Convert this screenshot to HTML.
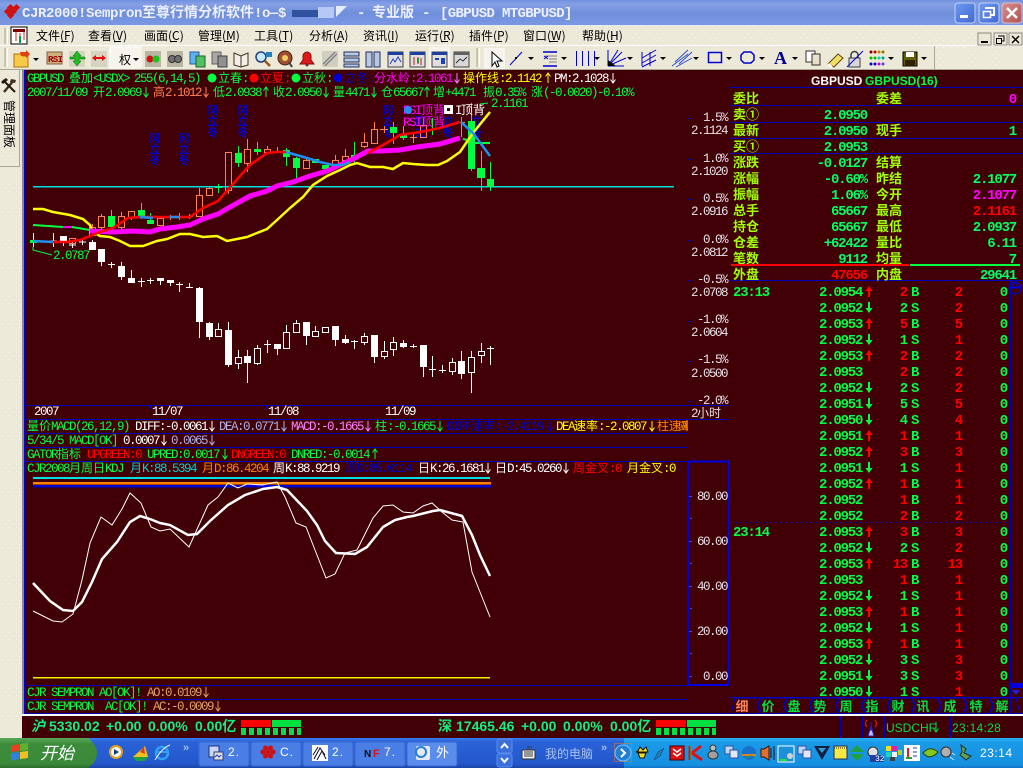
<!DOCTYPE html>
<html><head><meta charset="utf-8"><title>CJR2000</title>
<style>
html,body{margin:0;padding:0;background:#400005;overflow:hidden;width:1023px;height:768px}
svg{position:absolute;left:0;top:0;display:block}
text{font-family:"Liberation Mono","WenQuanYi Zen Hei","Noto Sans CJK SC",monospace;font-size:12.5px;letter-spacing:-1.5px;white-space:pre;shape-rendering:crispEdges}
tspan.z,text.z{font-family:"WenQuanYi Zen Hei","Noto Sans CJK SC",sans-serif;font-size:12px;letter-spacing:0}
.g{fill:#00ff40}.r{fill:#ff0000}.w{fill:#fff}.y{fill:#ffff00}.m{fill:#ff00ff}.b{fill:#0000c8}.o{fill:#ff8050}.l{fill:#b0b0e8}.p{fill:#ff80ff}.c{fill:#00d0d0}.t{fill:#e0a060}.or{fill:#ff8000}
.ax text{fill:#e8e0e8;text-anchor:end}
.lab text{font-family:"WenQuanYi Zen Hei","Noto Sans CJK SC",sans-serif;font-size:13px;letter-spacing:0;font-weight:bold;fill:#a0ff00}
.val text{font-size:14px;font-weight:bold;letter-spacing:-1.2px;text-anchor:end;fill:#00ff60}
.pr text{font-size:14px;font-weight:bold;letter-spacing:-1.2px;fill:#00ff40}
.rd text{font-size:14px;font-weight:bold;letter-spacing:-1.2px;text-anchor:end;fill:#ff0000}
.gv text{font-size:14px;font-weight:bold;letter-spacing:-1.2px;text-anchor:end;fill:#00ff40}
.bs text{font-size:14px;font-weight:bold;letter-spacing:-1.2px;fill:#00ff40}
.menu text{font-family:"WenQuanYi Zen Hei","Noto Sans CJK SC",sans-serif;font-size:12px;letter-spacing:0;fill:#000}
.tab text{font-family:"WenQuanYi Zen Hei","Noto Sans CJK SC",sans-serif;font-size:13px;letter-spacing:0;font-weight:bold;fill:#00e040;text-anchor:middle}
.st text{font-family:"Liberation Sans",sans-serif;font-size:14px;font-weight:bold;letter-spacing:0;fill:#10f080}
.dk{font-family:"WenQuanYi Zen Hei","Noto Sans CJK SC",sans-serif;font-size:11px;letter-spacing:0;fill:#0000d0;font-weight:bold}
.tb text{font-family:"Liberation Sans",sans-serif;font-size:12px;letter-spacing:1px;fill:#fff}
</style></head><body>
<svg width="1023" height="768" viewBox="0 0 1023 768" xmlns="http://www.w3.org/2000/svg">
<defs>
<pattern id="dp" width="7" height="7" patternUnits="userSpaceOnUse"><rect width="7" height="7" fill="#ece9d8"/><rect x="2" y="2" width="1" height="1" fill="#f8f6ee"/><rect x="5" y="5" width="1" height="1" fill="#f8f6ee"/></pattern>
<linearGradient id="ti" x1="0" y1="0" x2="0" y2="1"><stop offset="0" stop-color="#6f8fe0"/><stop offset=".15" stop-color="#86a0e4"/><stop offset=".5" stop-color="#6f8fdc"/><stop offset="1" stop-color="#7b98e4"/></linearGradient>
<linearGradient id="tk" x1="0" y1="0" x2="0" y2="1"><stop offset="0" stop-color="#3a7df0"/><stop offset=".12" stop-color="#2a62d8"/><stop offset=".85" stop-color="#2458cc"/><stop offset="1" stop-color="#1a44a8"/></linearGradient>
<linearGradient id="try" x1="0" y1="0" x2="0" y2="1"><stop offset="0" stop-color="#28b0f0"/><stop offset=".15" stop-color="#1a9ae8"/><stop offset=".9" stop-color="#1690e0"/><stop offset="1" stop-color="#1070c8"/></linearGradient>
<linearGradient id="sb" x1="0" y1="0" x2="0" y2="1"><stop offset="0" stop-color="#5aa85a"/><stop offset=".2" stop-color="#3c8c3c"/><stop offset=".85" stop-color="#3a8a3a"/><stop offset="1" stop-color="#2c6c2c"/></linearGradient>
<linearGradient id="wb" x1="0" y1="0" x2="1" y2="1"><stop offset="0" stop-color="#6f9af0"/><stop offset="1" stop-color="#3f68d0"/></linearGradient>
<linearGradient id="wc" x1="0" y1="0" x2="1" y2="1"><stop offset="0" stop-color="#d89090"/><stop offset="1" stop-color="#b05050"/></linearGradient>
<path id="d" d="M0 0V10M-2.5 6.5L0 10L2.5 6.5" fill="none"/>
<path id="u" d="M0 10V0M-2.5 3.5L0 0L2.5 3.5" fill="none"/>
<path id="D" d="M-1 0H1V6H3.5L0 11L-3.5 6H-1Z"/>
<path id="U" d="M-1 11H1V5H3.5L0 0L-3.5 5H-1Z"/>
<path id="v" d="M-3 0H3L0 3Z" fill="#000"/>
</defs>

<!-- background regions -->
<rect width="1023" height="768" fill="#400005"/>
<rect width="1023" height="26" fill="url(#ti)"/>
<rect y="26" width="1023" height="44" fill="url(#dp)"/>
<rect y="70" width="22" height="646" fill="url(#dp)"/>
<rect x="22" y="70" width="2" height="645" fill="#8c8a80"/>
<rect x="24" y="70" width="2" height="644" fill="#0000d8"/>
<rect y="25" width="1023" height="1" fill="#e8e8f0"/>
<rect y="45" width="1023" height="1" fill="#fff"/>
<rect y="46" width="935" height="23" fill="#ece9d8"/>
<rect x="934" y="46" width="1" height="23" fill="#aca899"/>
<rect y="69" width="1023" height="1" fill="#aca899"/>

<!-- title bar -->
<g fill="#d01010"><rect x="5" y="9" width="5" height="5" transform="rotate(45 7.5 11.5)"/><rect x="11" y="9" width="5" height="5" transform="rotate(45 13.5 11.5)"/><rect x="8" y="5" width="5" height="5" transform="rotate(45 10.5 7.5)"/><rect x="8" y="13" width="5" height="5" transform="rotate(45 10.5 15.5)"/><rect x="14" y="5" width="5" height="5" transform="rotate(45 16.5 7.5)"/></g>
<text x="22" y="17" style="font-size:14px;font-weight:bold;letter-spacing:-.4px;fill:#eef0ff">CJR2000!Sempron<tspan style="font-family:'WenQuanYi Zen Hei','Noto Sans CJK SC',sans-serif;letter-spacing:0">至尊行情分析软件</tspan>!o—$</text>
<rect x="292" y="10" width="26" height="7" fill="#3050a0"/><rect x="318" y="7" width="16" height="11" fill="#b8c8f4"/>
<path d="M336 6H347L336 17Z" fill="#e8ecff"/>
<text x="357" y="17" style="font-size:14px;font-weight:bold;letter-spacing:-.4px;fill:#eef0ff">-</text>
<text x="372" y="17" style="font-family:'WenQuanYi Zen Hei','Noto Sans CJK SC',sans-serif;font-size:14px;font-weight:bold;letter-spacing:0;fill:#eef0ff">专业版</text>
<text x="422" y="17" style="font-size:14px;font-weight:bold;letter-spacing:-.4px;fill:#eef0ff">-</text>
<text x="440" y="17" style="font-size:14px;font-weight:bold;letter-spacing:-.65px;fill:#eef0ff">[GBPUSD MTGBPUSD]</text>
<rect x="955" y="3" width="20" height="20" rx="3" fill="url(#wb)" stroke="#c0d0f8"/><rect x="960" y="15" width="8" height="3" fill="#fff"/>
<rect x="979" y="3" width="20" height="20" rx="3" fill="url(#wb)" stroke="#c0d0f8"/><path d="M985 8h9v7h-3" fill="none" stroke="#fff" stroke-width="2"/><rect x="983.500" y="11.500" width="7" height="6" fill="none" stroke="#fff" stroke-width="1.500"/>
<rect x="1002" y="3" width="20" height="20" rx="3" fill="url(#wc)" stroke="#e0c0c0"/><path d="M1007 8L1017 18M1017 8L1007 18" stroke="#fff" stroke-width="2.500"/>

<!-- menu bar -->
<g fill="#c8c5b2"><rect x="4" y="28" width="2" height="16"/><rect x="7" y="28" width="1" height="16" fill="#fff"/></g>
<rect x="11" y="27" width="16" height="17" fill="#fff" stroke="#000"/><rect x="13" y="29" width="12" height="3" fill="#800000"/><path d="M16 32V41M20 33V43M24 32V40" stroke="#e02020"/><path d="M20 36V43" stroke="#00a040" stroke-width="2"/>
<g class="menu">
<text x="36" y="40">文件(F)</text><text x="88" y="40">查看(V)</text><text x="144" y="40">画面(C)</text><text x="198" y="40">管理(M)</text><text x="254" y="40">工具(T)</text><text x="309" y="40">分析(A)</text><text x="363" y="40">资讯(I)</text><text x="415" y="40">运行(R)</text><text x="469" y="40">插件(P)</text><text x="523" y="40">窗口(W)</text><text x="582" y="40">帮助(H)</text>
</g>
<g fill="#000">
<rect x="61" y="41" width="7" height="1"/><rect x="114" y="41" width="7" height="1"/><rect x="170" y="41" width="7" height="1"/><rect x="224" y="41" width="8" height="1"/><rect x="280" y="41" width="7" height="1"/><rect x="335" y="41" width="7" height="1"/><rect x="389" y="41" width="5" height="1"/><rect x="441" y="41" width="7" height="1"/><rect x="495" y="41" width="7" height="1"/><rect x="549" y="41" width="9" height="1"/><rect x="608" y="41" width="7" height="1"/>
</g>
<!-- MDI buttons -->
<g fill="#ece9d8" stroke="#8c8a80"><rect x="978" y="33" width="13" height="12"/><rect x="994" y="33" width="13" height="12"/><rect x="1009" y="33" width="13" height="12"/></g>
<rect x="981" y="41" width="7" height="2" fill="#000"/>
<path d="M998 36h6v5h-2M996.500 38.500h5v5h-5z" fill="none" stroke="#000"/>
<path d="M1012 36L1019 43M1019 36L1012 43" stroke="#000" stroke-width="1.500"/>

<!-- toolbar -->
<g fill="#c8c5b2"><rect x="4" y="48" width="2" height="19"/><rect x="7" y="48" width="1" height="19" fill="#fff"/><rect x="476" y="48" width="2" height="19"/><rect x="479" y="48" width="1" height="19" fill="#fff"/></g>
<path d="M14 54h7l2 2h5v11H14Z" fill="#f8c848" stroke="#b07010"/><path d="M20 52l6 0 0-2 4 4-4 4 0-2-5 0z" fill="#e04010"/>
<use href="#v" x="36" y="58"/>
<rect x="47" y="52" width="15" height="12" fill="#d0b080" stroke="#806040"/><text x="48" y="62" style="font-size:9px;letter-spacing:-.6px;fill:#a00000;font-weight:bold">RSI</text>
<rect x="69" y="51" width="16" height="16" fill="#d6d3c0"/><path d="M77 51L81 56H79V57H85L85 59 79 59 79 61 81 61 77 66 73 61 75 61 75 59 70 59 70 57 75 57 75 56 73 56Z" fill="#20c020" stroke="#006000" stroke-width=".5"/>
<rect x="91" y="51" width="16" height="16" fill="#d6d3c0"/><path d="M92 58L96 55V57H102V55L106 58 102 61V59H96V61Z" fill="#e01010"/>
<rect x="110" y="47" width="32" height="22" fill="#f6f4ec"/><path d="M110 47H142M110 47V69" stroke="#fff"/>
<text class="z" x="119" y="64" style="fill:#000;font-size:12px">权</text><use href="#v" x="136" y="58"/>
<rect x="145" y="51" width="16" height="16" fill="#b8b5a4"/><circle cx="150" cy="59" r="3.500" fill="#d01010"/><circle cx="156" cy="59" r="3.500" fill="#20c020"/>
<rect x="167" y="51" width="16" height="16" fill="#b8b5a4"/><circle cx="172" cy="59" r="3.500" fill="#707070" stroke="#303030"/><circle cx="178" cy="59" r="3.500" fill="#707070" stroke="#303030"/>
<rect x="190" y="52" width="9" height="12" fill="#60b0f0" stroke="#2060a0"/><rect x="196" y="56" width="9" height="11" fill="#50c060" stroke="#206030"/>
<rect x="212" y="52" width="9" height="12" fill="#a8a8a8" stroke="#606060"/><rect x="218" y="56" width="9" height="11" fill="#909090" stroke="#404040"/>
<path d="M234 53l7 3 7-3v12l-7 2-7-2z" fill="#f4f0e8" stroke="#403020"/><path d="M241 56v11" stroke="#403020"/>
<circle cx="261" cy="57" r="5" fill="#c8e8ff" stroke="#204080" stroke-width="1.500"/><path d="M265 61l5 5" stroke="#a05010" stroke-width="2.500"/><rect x="266" y="52" width="6" height="5" fill="#2080c0"/>
<circle cx="285" cy="58" r="7" fill="#a05030" stroke="#402010"/><circle cx="285" cy="58" r="3" fill="#f0d060"/><path d="M289 62l3 5" stroke="#404040" stroke-width="2"/>
<path d="M300 64H314L311 60V56A4 4 0 0 0 303 56V60Z" fill="#e01818" stroke="#801010"/><circle cx="307" cy="65" r="1.500" fill="#802020"/>
<rect x="322" y="51" width="16" height="16" fill="#d0cebc"/><path d="M324 65L336 53" stroke="#808080" stroke-width="4"/><path d="M324 65L336 53" stroke="#d8d8d8" stroke-width="1"/>
<g fill="#b8c8e0" stroke="#203060"><rect x="344" y="52" width="15" height="4"/><rect x="344" y="58" width="15" height="4"/><rect x="344" y="64" width="15" height="3"/></g>
<g fill="#b8c8e0" stroke="#203060"><rect x="366" y="52" width="6" height="15"/><rect x="374" y="52" width="6" height="15"/></g>
<rect x="388" y="52" width="15" height="15" fill="#e0e0e0" stroke="#404040"/><rect x="388" y="52" width="15" height="3" fill="#2040a0"/><path d="M390 64l3-5 2 3 3-5 3 5" fill="none" stroke="#2040c0"/>
<rect x="410" y="52" width="15" height="15" fill="#e0e0e0" stroke="#404040"/><rect x="410" y="52" width="15" height="3" fill="#2040a0"/><path d="M414 57v8M418 57v7M421 58v7" stroke="#d01010"/><path d="M418 58v5" stroke="#10a040" stroke-width="2"/>
<rect x="429" y="47" width="21" height="22" fill="#f6f4ec"/>
<rect x="432" y="52" width="15" height="15" fill="#e0e0e0" stroke="#404040"/><rect x="432" y="52" width="15" height="3" fill="#2040a0"/><rect x="435" y="58" width="4" height="2" fill="#2040c0"/><rect x="441" y="58" width="4" height="6" fill="#2040c0"/>
<rect x="454" y="52" width="15" height="15" fill="#d8d8d8" stroke="#404040"/><rect x="454" y="52" width="15" height="3" fill="#606060"/><path d="M456 63l4-4 3 2 4-4" fill="none" stroke="#303030"/>
<rect x="484" y="48" width="21" height="21" fill="#f6f4ec"/>
<path d="M492 52V66L495 62 497 67 499 66 497 61 502 61Z" fill="#fff" stroke="#000"/>
<path d="M510 65L522 52" stroke="#0000d0"/><rect x="515" y="57" width="2" height="2" fill="#000"/><use href="#v" x="531" y="57"/>
<path d="M543 52H557M543 66H557" stroke="#0000d0" stroke-width="1.500"/><path d="M545 56H557M549 59H557M549 62H557" stroke="#808080"/><path d="M544 56l4 3M544 59l4-3" stroke="#0000d0"/><use href="#v" x="564" y="57"/>
<path d="M576.500 51V66M582.500 51V66M588.500 51V66" stroke="#0000d0"/><path d="M594.500 51V66" stroke="#0000d0"/><use href="#v" x="597" y="57"/>
<path d="M608 66V50M608 66L624 66M608 66L622 52M608 66L626 58M608 66L618 50" stroke="#0000d0" fill="none"/><path d="M608 60L616 66H608Z" fill="#000"/><use href="#v" x="630" y="57"/>
<path d="M642 52V66M650 52V66M642 58L656 50M642 63L656 55M642 67L656 60" stroke="#0000d0" fill="none"/><use href="#v" x="663" y="57"/>
<path d="M675 62L688 50M679 64L692 52M672 66L688 54M676 67L692 58" stroke="#3050d0" fill="none"/><use href="#v" x="696" y="57"/>
<rect x="708.500" y="52.500" width="13" height="10" fill="none" stroke="#0000d0" stroke-width="1.500"/><use href="#v" x="729" y="57"/>
<path d="M744 52h7l3 3v5l-3 3h-7l-3-3v-5z" fill="none" stroke="#0000d0" stroke-width="1.500"/><use href="#v" x="762" y="57"/>
<text x="774" y="64" style="font-family:'Liberation Serif',serif;font-size:18px;font-weight:bold;fill:#000090;letter-spacing:0">A</text><use href="#v" x="795" y="57"/>
<rect x="806" y="51" width="9" height="11" fill="#fff" stroke="#303030"/><rect x="812" y="54" width="8" height="11" fill="#e8e0c8" stroke="#303030"/>
<path d="M828 64l10-10 5 4-9 9z" fill="#f0e060" stroke="#604010"/><path d="M828 64l4 3" stroke="#fff" stroke-width="2"/>
<rect x="849" y="58" width="11" height="9" fill="#d8d8d8" stroke="#404040"/><path d="M851 58v-3a3 3 0 0 1 7 0v3" fill="none" stroke="#404040" stroke-width="1.500"/><path d="M847 67L863 51" stroke="#0000d0"/>
<g fill="#800000"><circle cx="871" cy="52" r="1.500"/><circle cx="875" cy="52" r="1.500" fill="#d00000"/><circle cx="879" cy="52" r="1.500" fill="#c08000"/><circle cx="883" cy="52" r="1.500" fill="#808000"/></g>
<g fill="#00c000"><circle cx="871" cy="58" r="1.500"/><circle cx="875" cy="58" r="1.500"/><circle cx="879" cy="58" r="1.500" fill="#00d0d0"/><circle cx="883" cy="58" r="1.500" fill="#00a080"/></g>
<g fill="#0000c0"><circle cx="871" cy="64" r="1.500"/><circle cx="875" cy="64" r="1.500"/><circle cx="879" cy="64" r="1.500" fill="#d000d0"/><circle cx="883" cy="64" r="1.500" fill="#4040f0"/></g>
<use href="#v" x="891" y="57"/>
<rect x="903" y="52" width="14" height="14" fill="#606000" stroke="#000"/><rect x="906" y="52" width="8" height="5" fill="#fff"/><rect x="905" y="60" width="10" height="6" fill="#302000"/>
<use href="#v" x="924" y="57"/>

<!-- sidebar -->
<path d="M19.500 70V166.500H0" fill="none" stroke="#aca899"/>
<path d="M4 92L14 80" stroke="#403020" stroke-width="2.500" fill="none"/><path d="M3 80L15 92" stroke="#201810" stroke-width="2" fill="none"/><path d="M1 82l5-4 2 2-5 4z" fill="#201810"/><path d="M11 79l5 1-1 3-5-1z" fill="#403020"/>
<text class="z" transform="translate(5 100) rotate(90)" style="font-size:12px;fill:#000">管理面板</text>

<!-- grid lines -->
<g stroke="#0000b8" fill="none" shape-rendering="crispEdges">
<path d="M687.500 70V714M729.500 70V714M24 405.500H730M24 419.500H730M24 433.500H687M24 447.500H687M24 461.500H687M24 685.500H730M24 699.500H687M24 713.500H1023"/>
<path d="M729 87.500H1023M729 105.500H1023M729 122.500H1023M729 138.500H1023M729 153.500H1023M729 280.500H1023M1010.500 281V714M729 697.500H1023"/>
<path d="M33.500 405V419M150.500 405V409M266.500 405V409M383.500 405V409"/>
<path d="M688 118.500h4M688 159.500h4M688 199.500h4M688 240.500h4M688 280.500h4M688 321.500h4M688 361.500h4M688 401.500h4"/>
<path d="M730 522.500H1010" stroke-dasharray="2 3"/>
<path d="M692 496.500h-3M692 518.500h-2M692 541.500h-3M692 563.500h-2M692 586.500h-3M692 608.500h-2M692 631.500h-3M692 653.500h-2M692 676.500h-3" stroke="#4040ff"/>
</g>
<rect x="688" y="461.500" width="41" height="223.500" fill="none" stroke="#0000e0" stroke-width="2"/>

<!-- top rows -->
<text x="27" y="82" class="g">GBPUSD</text>
<text x="69" y="82" class="g"><tspan class="z">叠加</tspan>&lt;USDX&gt;</text>
<text x="134" y="82" class="g">255(6,14,5)</text>
<circle cx="212" cy="78" r="4.500" fill="#00ff40"/><text x="218" y="82" class="g"><tspan class="z">立春</tspan>:</text>
<circle cx="254" cy="78" r="4.500" fill="#ff0000"/><text x="260" y="82" class="r"><tspan class="z">立夏</tspan>:</text>
<circle cx="296" cy="78" r="4.500" fill="#00ff40"/><text x="302" y="82" class="g"><tspan class="z">立秋</tspan>:</text>
<circle cx="338" cy="78" r="4.500" fill="#0000d0"/><text x="344" y="82" class="b"><tspan class="z">立冬</tspan>:</text>
<text x="374" y="82" class="m"><tspan class="z">分水岭</tspan>:2.1061</text>
<use href="#d" x="457" y="73" stroke="#ff80ff"/>
<text x="463" y="82" class="y"><tspan class="z">操作线</tspan>:2.1142</text>
<use href="#u" x="548" y="73" stroke="#ffff00"/>
<text x="554" y="82" class="w">PM:2.1028</text>
<use href="#d" x="613" y="73" stroke="#fff"/>

<text x="27" y="96" class="g">2007/11/09</text>
<text x="93" y="96" class="g"><tspan class="z">开</tspan>2.0969</text><use href="#d" x="146" y="87" stroke="#00ff40"/>
<text x="153" y="96" class="o"><tspan class="z">高</tspan>2.1012</text><use href="#d" x="206" y="87" stroke="#ff8050"/>
<text x="213" y="96" class="g"><tspan class="z">低</tspan>2.0938</text><use href="#u" x="266" y="87" stroke="#00ff40"/>
<text x="273" y="96" class="g"><tspan class="z">收</tspan>2.0950</text><use href="#d" x="326" y="87" stroke="#00ff40"/>
<text x="333" y="96" class="g"><tspan class="z">量</tspan>4471</text><use href="#d" x="374" y="87" stroke="#00ff40"/>
<text x="381" y="96" class="g"><tspan class="z">仓</tspan>65667</text><use href="#u" x="427" y="87" stroke="#00ff40"/>
<text x="433" y="96" class="g"><tspan class="z">增</tspan>+4471</text>
<text x="483" y="96" class="g"><tspan class="z">振</tspan>0.35%</text>
<text x="531" y="96" class="g"><tspan class="z">涨</tspan>(-0.0020)-0.10%</text>

<!-- blue 立冬 marks -->
<g text-anchor="middle">
<text class="dk" x="155" y="142">冈</text><text class="dk" x="155" y="153">立</text><text class="dk" x="155" y="164">冬</text>
<text class="dk" x="184" y="142">冈</text><text class="dk" x="184" y="153">立</text><text class="dk" x="184" y="164">冬</text>
<text class="dk" x="213" y="114">冈</text><text class="dk" x="213" y="125">立</text><text class="dk" x="213" y="136">冬</text>
<text class="dk" x="243" y="114">冈</text><text class="dk" x="243" y="125">立</text><text class="dk" x="243" y="136">冬</text>
<text class="dk" x="388" y="114">冈</text><text class="dk" x="388" y="125">立</text><text class="dk" x="388" y="136">冬</text>
<text class="dk" x="420" y="125">冈</text><text class="dk" x="420" y="136">立</text>
<text class="dk" x="448" y="125">立</text><text class="dk" x="448" y="136">冬</text>
<text class="dk" x="477" y="125">立</text><text class="dk" x="477" y="136">冬</text>
</g>

<!-- cyan line -->
<rect x="33" y="186" width="641" height="1.500" fill="#00e0e0"/>

<!-- white candles wicks -->
<path shape-rendering="crispEdges" fill="none" stroke="#fff" d="M33.500 233V247M30 241H37M53.500 233V247M50 241H57M63.500 236V246M72.500 242V248M69 245H76M82.500 239V245M79 242H86M92.500 240V250M101.500 262V266M111.500 262V268M108 264.500H115M121.500 262V280M131.500 270V283M141.500 278V287M138 281.500H145M150.500 278V284M147 280.500H154M160.500 281V285M170.500 283V286M179.500 282V292M176 284.500H183M189.500 283V288M186 287.500H193M199.500 287V338M209.500 322V340M218.500 323V329M228.500 322V367M238.500 350V357M238.500 363V369M247.500 350V383M257.500 345V348M257.500 363V365M267.500 340V353M264 344.500H271M277.500 349V355M286.500 325V332M286.500 348V349M296.500 320V323M306.500 336V345M315.500 326V331M325.500 332V333M335.500 340V346M345.500 335V344M354.500 340V349M351 341.500H358M364.500 333V336M364.500 342V345M374.500 335V363M384.500 341V351M384.500 356V359M393.500 337V342M393.500 349V356M403.500 340V348M413.500 344V348M410 346.500H417M423.500 345V377M432.500 356V377M429 369.500H436M442.500 365V373M439 370.500H446M452.500 358V362M452.500 371V375M461.500 351V379M471.500 351V357M471.500 372V393M481.500 343V351M481.500 355V363M490.500 346V365M487 348.500H494"/>
<path shape-rendering="crispEdges" fill="#fff" d="M60 236h7v5h-7zM89 242h7v8h-7zM98 249h7v13h-7zM118 266h7v11h-7zM128 278h7v5h-7zM157 278h7v3h-7zM167 280h7v3h-7zM196 288h7v34h-7zM206 323h7v14h-7zM225 330h7v35h-7zM244 356h7v7h-7zM274 344h7v5h-7zM303 322h7v14h-7zM332 326h7v14h-7zM342 339h7v4h-7zM371 335h7v22h-7zM400 343h7v4h-7zM420 345h7v22h-7zM458 361h7v13h-7z"/>
<path shape-rendering="crispEdges" fill="none" stroke="#fff" d="M215.500 329.500h6v7h-6zM235.500 357.500h6v6h-6zM254.500 348.500h6v15h-6zM283.500 332.500h6v16h-6zM293.500 323.500h6v9h-6zM312.500 331.500h6v5h-6zM322.500 327.500h6v5h-6zM361.500 336.500h6v6h-6zM381.500 351.500h6v5h-6zM390.500 342.500h6v7h-6zM449.500 362.500h6v9h-6zM468.500 357.500h6v15h-6zM478.500 351.500h6v4h-6z"/>

<!-- orange candles -->
<path shape-rendering="crispEdges" fill="none" stroke="#ff8050" d="M69.500 238.500h6v5h-6zM89.500 227.500h6v8h-6zM92.500 224V227M98.500 216.500h6v11h-6zM101.500 214V216M101.500 228V229M118.500 216.500h6v11h-6zM121.500 212V216M121.500 228V230M128.500 211.500h6v6h-6zM131.500 218V220M170.500 215V220M167 217.500H174M157.500 218.500h6v7h-6zM189.500 214V219M186 216.500H193M196.500 195.500h6v21h-6zM199.500 188V195M199.500 217V217M206.500 188.500h6v7h-6zM209.500 186V188M225.500 152.500h6v38h-6zM228.500 190V194M244.500 149.500h6v14h-6zM247.500 139V149M247.500 164V172M264.500 149.500h6v3h-6zM267.500 146V149M277.500 147V153M274 151.500H281M303.500 160.500h6v8h-6zM306.500 157V160M332.500 160.500h6v6h-6zM335.500 155V160M342.500 156.500h6v4h-6zM345.500 149V156M361.500 142.500h6v4h-6zM364.500 133V142M364.500 147V148M371.500 129.500h6v14h-6zM374.500 122V129M384.500 126V133M380 129.500H388M413.500 133V143M410 137.500H417M420.500 125.500h6v12h-6zM423.500 118V125M461.500 117V137M458 122.500H465"/>
<!-- green candles -->
<path shape-rendering="crispEdges" fill="#00ff40" d="M108 216h7v11h-7zM138 210h7v7h-7zM147 220h7v4h-7zM235 153h7v10h-7zM254 149h7v3h-7zM283 150h7v7h-7zM293 158h7v10h-7zM312 159h7v4h-7zM322 165h7v4h-7zM351 155h7v3h-7zM390 127h7v6h-7zM400 135h7v3h-7zM468 121h7v48h-7zM477 168h8v10h-8zM487 179h7v8h-7z"/>
<path shape-rendering="crispEdges" fill="none" stroke="#00ff40" d="M111.500 210V228M141.500 203V219M150.500 213V224M179.500 213V220M176 217.500H183M218.500 184V193M215 187.500H222M238.500 146V167M257.500 142V155M286.500 148V166M296.500 157V178M354.500 142V164M393.500 122V144M403.500 126V140M432.500 118V135M471.500 103V171M481.500 151V191M490.500 162V191"/>
<rect x="30" y="240" width="7" height="3" fill="#00ff40"/>

<!-- MA lines -->
<polyline fill="none" stroke="#00ff40" stroke-width="2" points="33,225 63,227"/>
<polyline fill="none" stroke="#ff00ff" stroke-width="2" points="63,227 72,227"/>
<polyline fill="none" stroke="#00ff40" stroke-width="2" points="72,227 90,230"/>
<polyline fill="none" stroke="#00ff40" stroke-width="2" points="463,139 468,140 475,143 490,143"/>
<polyline fill="none" stroke="#ffff00" stroke-width="2.500" points="33,209 43,209 53,212 70,215 83,219 90,225 93,232 100,236 110,237 120,241 130,246 143,246 157,241 167,239 180,234 190,234 203,237 217,236 227,241 237,239 247,237 257,233 267,229 277,220 290,208 303,197 313,185 327,176 340,170 350,165 357,163 370,167 383,167 393,169 403,163 413,164 427,165 438,165 447,161 460,152 473,133 490,112"/>
<polyline fill="none" stroke="#ff00ff" stroke-width="5" points="90,231 113,232 133,231 150,232 160,229 177,227 190,225 203,219 218,214 230,207 250,196 267,191 277,186 293,182 310,176 327,171 340,165 353,159 368,151 380,151 400,150 417,147 440,144 460,138"/>
<polyline fill="none" stroke="#ff0000" stroke-width="2.500" points="53,242 67,242 80,240 90,236 100,232 113,228 128,218 140,217 153,217 170,217 190,217 203,208 218,201 232,185 250,165 267,153 277,152 286,152"/>
<polyline fill="none" stroke="#ff0000" stroke-width="2.500" points="368,153 383,145 400,135 420,132 440,128 460,122"/>
<polyline fill="none" stroke="#2090f0" stroke-width="2.500" points="33,241 53,242"/>
<polyline fill="none" stroke="#2090f0" stroke-width="2.500" points="140,217 153,218"/>
<polyline fill="none" stroke="#2090f0" stroke-width="2.500" points="170,217 180,217"/>
<polyline fill="none" stroke="#2090f0" stroke-width="2.500" points="286,152 293,154 307,158 320,162 333,165 343,165 350,162"/>
<polyline fill="none" stroke="#2090f0" stroke-width="2.500" points="461,122 473,133 490,156"/>
<polyline fill="none" stroke="#00ff40" points="33,247 33,250 52,255"/>
<polyline fill="none" stroke="#00ff40" points="480,104 488,103"/>
<text x="53" y="259" class="g">2.0787</text>
<text x="491" y="107" class="g">2.1161</text>

<!-- divergence labels -->
<text x="403" y="114" class="m">RSI<tspan class="z">顶背</tspan></text>
<text x="403" y="126" class="m">RSI<tspan class="z">顶背</tspan></text>
<circle cx="408" cy="110" r="4" fill="#2090f0"/>
<rect x="444" y="105" width="9" height="9" fill="#fff"/><rect x="447" y="108" width="3" height="3" fill="#400005"/>
<text x="455" y="114" class="w">I<tspan class="z">顶背</tspan></text>

<!-- time axis -->
<text x="34" y="415" class="w">2007</text><text x="152" y="415" class="w">11/07</text><text x="268" y="415" class="w">11/08</text><text x="385" y="415" class="w">11/09</text>

<!-- axis labels -->
<g class="ax">
<text x="727" y="121">1.5%</text><text x="727" y="134">2.1124</text>
<text x="727" y="162">1.0%</text><text x="727" y="175">2.1020</text>
<text x="727" y="202">0.5%</text><text x="727" y="215">2.0916</text>
<text x="727" y="243">0.0%</text><text x="727" y="256">2.0812</text>
<text x="727" y="283">-0.5%</text><text x="727" y="296">2.0708</text>
<text x="727" y="323">-1.0%</text><text x="727" y="336">2.0604</text>
<text x="727" y="363">-1.5%</text><text x="727" y="377">2.0500</text>
<text x="727" y="404">-2.0%</text><text x="721" y="417">2<tspan class="z">小时</tspan></text>
<text x="727" y="500">80.00</text><text x="727" y="545">60.00</text><text x="727" y="590">40.00</text><text x="727" y="635">20.00</text><text x="727" y="680">0.00</text>
</g>
<text class="z" transform="translate(680 421) rotate(90)" style="font-size:10px;fill:#ff9000">图</text>

<!-- indicator rows -->
<text x="27" y="430" class="g"><tspan class="z">量价</tspan>MACD(26,12,9)</text>
<text x="135" y="430" class="w">DIFF:-0.0061</text><use href="#d" x="212" y="421" stroke="#fff"/>
<text x="219" y="430" class="l">DEA:0.0771</text><use href="#d" x="284" y="421" stroke="#b0b0e8"/>
<text x="291" y="430" class="p">MACD:-0.1665</text><use href="#d" x="368" y="421" stroke="#ff80ff"/>
<text x="375" y="430" class="g"><tspan class="z">柱</tspan>:-0.1665</text><use href="#d" x="440" y="421" stroke="#00ff40"/>
<text x="447" y="430" class="b">DIFF<tspan class="z">速率</tspan>:-2.4119</text><use href="#d" x="550" y="421" stroke="#0000c8"/>
<text x="556" y="430" class="y">DEA<tspan class="z">速率</tspan>:-2.0807</text><use href="#d" x="652" y="421" stroke="#ffff00"/>
<text x="657" y="430" class="or"><tspan class="z">柱速率</tspan></text>
<rect x="688" y="420" width="6" height="13" fill="#400005"/>

<text x="27" y="444" class="g">5/34/5 MACD[OK]</text>
<text x="123" y="444" class="w">0.0007</text><use href="#d" x="164" y="435" stroke="#fff"/>
<text x="171" y="444" class="l">0.0065</text><use href="#d" x="212" y="435" stroke="#b0b0e8"/>

<text x="27" y="458" class="g">GATOR<tspan class="z">指标</tspan></text>
<text x="87" y="458" class="r">UPGREEN:0</text>
<text x="147" y="458" class="g">UPRED:0.0017</text><use href="#d" x="225" y="449" stroke="#00ff40"/>
<text x="231" y="458" class="r">DNGREEN:0</text>
<text x="291" y="458" class="g">DNRED:-0.0014</text><use href="#u" x="375" y="449" stroke="#00ff40"/>

<text x="27" y="472" class="g">CJR2008<tspan class="z">月周日</tspan>KDJ</text>
<text x="130" y="472" class="c"><tspan class="z">月</tspan>K:88.5394</text>
<text x="202" y="472" class="or"><tspan class="z">月</tspan>D:86.4204</text>
<text x="273" y="472" class="w"><tspan class="z">周</tspan>K:88.9219</text>
<text x="345" y="472" class="b"><tspan class="z">周</tspan>D:85.0114</text>
<text x="418" y="472" class="w"><tspan class="z">日</tspan>K:26.1681</text><use href="#d" x="488" y="463" stroke="#fff"/>
<text x="495" y="472" class="w"><tspan class="z">日</tspan>D:45.0260</text><use href="#d" x="566" y="463" stroke="#fff"/>
<text x="573" y="472" class="r"><tspan class="z">周金叉</tspan>:0</text>
<text x="627" y="472" class="y"><tspan class="z">月金叉</tspan>:0</text>

<!-- KDJ -->
<rect x="33" y="477" width="457" height="2" fill="#00e0e0"/>
<rect x="33" y="482" width="458" height="2.500" fill="#ff8000"/>
<rect x="33" y="485" width="458" height="2.500" fill="#0000d0"/>
<polyline fill="none" stroke="#fff" stroke-width="1" points="33,611 53,621 62,622 73,614 82,580 90,543 101,517 112,525 122,509 130,493 141,503 151,527 160,531 170,529 189,547 208,505 218,497 228,483 238,488 247,484 262,485 277,482 285,497 296,523 306,527 315,550 326,578 335,574 345,553 357,550 373,518 383,506 393,505 403,512 413,513 423,506 432,503 442,512 452,520 463,522 472,572 490,617"/>
<polyline fill="none" stroke="#fff" stroke-width="2.500" points="33,583 50,601 63,610 73,611 82,602 92,582 102,559 117,542 130,522 140,516 150,519 160,523 170,525 188,535 197,534 210,521 228,505 245,495 263,489 277,487 287,490 307,511 317,525 325,541 336,553 355,554 367,547 383,527 395,520 407,517 413,516 433,511 440,510 462,516 472,535 480,555 490,576"/>
<rect x="33" y="677" width="457" height="1.500" fill="#f0f000"/>

<text x="27" y="696" class="g">CJR SEMPRON AO[OK]!</text>
<text x="147" y="696" class="t">AO:0.0109</text><use href="#d" x="206" y="687" stroke="#e0a060"/>
<text x="27" y="710" class="g">CJR SEMPRON  AC[OK]!</text>
<text x="153" y="710" class="t">AC:-0.0009</text><use href="#d" x="218" y="701" stroke="#e0a060"/>

<!-- right panel header -->
<text x="811" y="85" style="font-family:'Liberation Sans',sans-serif;font-size:12px;font-weight:bold;letter-spacing:0;fill:#fff">GBPUSD</text>
<text x="865" y="85" style="font-family:'Liberation Sans',sans-serif;font-size:12px;font-weight:bold;letter-spacing:0;fill:#00ff40">GBPUSD(16)</text>

<g class="lab">
<text x="733" y="103">委比</text><text x="733" y="119">卖①</text><text x="733" y="135">最新</text><text x="733" y="151">买①</text><text x="733" y="167">涨跌</text><text x="733" y="183">涨幅</text><text x="733" y="199">振幅</text><text x="733" y="215">总手</text><text x="733" y="231">持仓</text><text x="733" y="247">仓差</text><text x="733" y="263">笔数</text><text x="733" y="279">外盘</text>
<text x="876" y="103">委差</text><text x="876" y="135">现手</text><text x="876" y="167">结算</text><text x="876" y="183">昨结</text><text x="876" y="199">今开</text><text x="876" y="215">最高</text><text x="876" y="231">最低</text><text x="876" y="247">量比</text><text x="876" y="263">均量</text><text x="876" y="279">内盘</text>
</g>
<g class="val">
<text x="867" y="119">2.0950</text><text x="867" y="135">2.0950</text><text x="867" y="151">2.0953</text><text x="867" y="167">-0.0127</text><text x="867" y="183">-0.60%</text><text x="867" y="199">1.06%</text><text x="867" y="215">65667</text><text x="867" y="231">65667</text><text x="867" y="247">+62422</text><text x="867" y="263">9112</text>
<text x="867" y="279" style="fill:#ff0000">47656</text>
<text x="1016" y="103" style="fill:#ff00ff">0</text><text x="1016" y="135">1</text><text x="1016" y="183">2.1077</text><text x="1016" y="199" style="fill:#ff00ff">2.1077</text><text x="1016" y="215" style="fill:#ff0000">2.1161</text><text x="1016" y="231">2.0937</text><text x="1016" y="247">6.11</text><text x="1016" y="263">7</text><text x="1016" y="279">29641</text>
</g>
<rect x="731" y="264" width="178" height="2" fill="#ff0000"/><rect x="910" y="264" width="110" height="2" fill="#00ff40"/>

<!-- tick list -->
<g class="pr">
<text x="733" y="296">23:13</text><text x="733" y="536">23:14</text>
<text x="819" y="296">2.0954</text><text x="819" y="312">2.0952</text><text x="819" y="328">2.0953</text><text x="819" y="344">2.0952</text><text x="819" y="360">2.0953</text><text x="819" y="376">2.0953</text><text x="819" y="392">2.0952</text><text x="819" y="408">2.0951</text><text x="819" y="424">2.0950</text><text x="819" y="440">2.0951</text><text x="819" y="456">2.0952</text><text x="819" y="472">2.0951</text><text x="819" y="488">2.0952</text><text x="819" y="504">2.0952</text><text x="819" y="520">2.0952</text><text x="819" y="536">2.0953</text><text x="819" y="552">2.0952</text><text x="819" y="568">2.0953</text><text x="819" y="584">2.0953</text><text x="819" y="600">2.0952</text><text x="819" y="616">2.0953</text><text x="819" y="632">2.0952</text><text x="819" y="648">2.0953</text><text x="819" y="664">2.0952</text><text x="819" y="680">2.0951</text><text x="819" y="696">2.0950</text>
</g>
<g fill="#ff0000"><use href="#U" x="869" y="286"/><use href="#U" x="869" y="318"/><use href="#U" x="869" y="350"/><use href="#U" x="869" y="430"/><use href="#U" x="869" y="446"/><use href="#U" x="869" y="478"/><use href="#U" x="869" y="526"/><use href="#U" x="869" y="558"/><use href="#U" x="869" y="606"/><use href="#U" x="869" y="638"/></g>
<g fill="#00ff40"><use href="#D" x="869" y="302"/><use href="#D" x="869" y="334"/><use href="#D" x="869" y="382"/><use href="#D" x="869" y="398"/><use href="#D" x="869" y="414"/><use href="#D" x="869" y="462"/><use href="#D" x="869" y="542"/><use href="#D" x="869" y="590"/><use href="#D" x="869" y="622"/><use href="#D" x="869" y="654"/><use href="#D" x="869" y="670"/><use href="#D" x="869" y="686"/></g>
<g class="rd">
<text x="907" y="296">2</text><text x="907" y="328">5</text><text x="907" y="360">2</text><text x="907" y="376">2</text><text x="907" y="440">1</text><text x="907" y="456">3</text><text x="907" y="488">1</text><text x="907" y="504">1</text><text x="907" y="520">2</text><text x="907" y="536">3</text><text x="907" y="568">13</text><text x="907" y="584">1</text><text x="907" y="616">1</text><text x="907" y="648">1</text>
<text x="962" y="296">2</text><text x="962" y="312">2</text><text x="962" y="328">5</text><text x="962" y="344">1</text><text x="962" y="360">2</text><text x="962" y="376">2</text><text x="962" y="392">2</text><text x="962" y="408">5</text><text x="962" y="424">4</text><text x="962" y="440">1</text><text x="962" y="456">3</text><text x="962" y="472">1</text><text x="962" y="488">1</text><text x="962" y="504">1</text><text x="962" y="520">2</text><text x="962" y="536">3</text><text x="962" y="552">2</text><text x="962" y="568">13</text><text x="962" y="584">1</text><text x="962" y="600">1</text><text x="962" y="616">1</text><text x="962" y="632">1</text><text x="962" y="648">1</text><text x="962" y="664">3</text><text x="962" y="680">3</text><text x="962" y="696">1</text>
</g>
<g class="gv">
<text x="907" y="312">2</text><text x="907" y="344">1</text><text x="907" y="392">2</text><text x="907" y="408">5</text><text x="907" y="424">4</text><text x="907" y="472">1</text><text x="907" y="552">2</text><text x="907" y="600">1</text><text x="907" y="632">1</text><text x="907" y="664">3</text><text x="907" y="680">3</text><text x="907" y="696">1</text>
<text x="1007" y="296">0</text><text x="1007" y="312">0</text><text x="1007" y="328">0</text><text x="1007" y="344">0</text><text x="1007" y="360">0</text><text x="1007" y="376">0</text><text x="1007" y="392">0</text><text x="1007" y="408">0</text><text x="1007" y="424">0</text><text x="1007" y="440">0</text><text x="1007" y="456">0</text><text x="1007" y="472">0</text><text x="1007" y="488">0</text><text x="1007" y="504">0</text><text x="1007" y="520">0</text><text x="1007" y="536">0</text><text x="1007" y="552">0</text><text x="1007" y="568">0</text><text x="1007" y="584">0</text><text x="1007" y="600">0</text><text x="1007" y="616">0</text><text x="1007" y="632">0</text><text x="1007" y="648">0</text><text x="1007" y="664">0</text><text x="1007" y="680">0</text><text x="1007" y="696">0</text>
</g>
<g class="bs">
<text x="911" y="296">B</text><text x="911" y="312">S</text><text x="911" y="328">B</text><text x="911" y="344">S</text><text x="911" y="360">B</text><text x="911" y="376">B</text><text x="911" y="392">S</text><text x="911" y="408">S</text><text x="911" y="424">S</text><text x="911" y="440">B</text><text x="911" y="456">B</text><text x="911" y="472">S</text><text x="911" y="488">B</text><text x="911" y="504">B</text><text x="911" y="520">B</text><text x="911" y="536">B</text><text x="911" y="552">S</text><text x="911" y="568">B</text><text x="911" y="584">B</text><text x="911" y="600">S</text><text x="911" y="616">B</text><text x="911" y="632">S</text><text x="911" y="648">B</text><text x="911" y="664">S</text><text x="911" y="680">S</text><text x="911" y="696">S</text>
</g>

<!-- scrollbar -->
<circle cx="1015" cy="288" r="6" fill="none" stroke="#0000e0"/><path d="M1009 288H1021M1015 282L1011 287H1019Z" stroke="#0000e0" fill="none"/>
<rect x="1011" y="683" width="12" height="5" fill="#0000e0"/><path d="M1012 690H1020L1016 695Z" fill="#2020e0"/>

<!-- tabs -->
<path fill="none" stroke="#0000d8" d="M731 713L735 698H757L761 713M757 713L761 698H783L787 713M783 713L787 698H809L813 713M809 713L813 698H835L839 713M835 713L839 698H861L865 713M861 713L865 698H887L891 713M887 713L891 698H912L916 713M912 713L916 698H938L942 713M938 713L942 698H964L968 713M964 713L968 698H990L994 713M990 713L994 698H1016L1020 713"/>
<g class="tab">
<text x="742" y="711" style="fill:#ff8050">细</text><text x="768" y="711">价</text><text x="794" y="711">盘</text><text x="820" y="711">势</text><text x="846" y="711">周</text><text x="872" y="711">指</text><text x="898" y="711">财</text><text x="923" y="711">讯</text><text x="950" y="711">成</text><text x="976" y="711">特</text><text x="1002" y="711">解</text>
</g>

<!-- status bar -->
<rect x="0" y="716" width="22" height="22" fill="url(#dp)"/>
<rect x="0" y="714" width="22" height="2" fill="url(#dp)"/>
<rect x="22" y="714" width="1001" height="2" fill="#fff"/>
<g class="st">
<text x="31" y="731" style="font-family:'WenQuanYi Zen Hei','Noto Sans CJK SC',sans-serif;font-style:italic">沪</text><text x="49" y="731">5330.02</text><text x="106" y="731">+0.00</text><text x="148" y="731">0.00%</text><text x="195" y="731">0.00<tspan style="font-family:'WenQuanYi Zen Hei','Noto Sans CJK SC',sans-serif">亿</tspan></text>
<text x="438" y="731" style="font-family:'WenQuanYi Zen Hei','Noto Sans CJK SC',sans-serif">深</text><text x="456" y="731">17465.46</text><text x="521" y="731">+0.00</text><text x="563" y="731">0.00%</text><text x="610" y="731">0.00<tspan style="font-family:'WenQuanYi Zen Hei','Noto Sans CJK SC',sans-serif">亿</tspan></text>
</g>
<g shape-rendering="crispEdges">
<rect x="241" y="720" width="30" height="7" fill="#ff0000"/><rect x="272" y="720" width="29" height="7" fill="#00e040"/>
<g fill="#00e040"><rect x="241" y="728" width="5" height="7"/><rect x="249" y="728" width="5" height="7"/><rect x="257" y="728" width="5" height="7"/><rect x="265" y="728" width="5" height="7"/><rect x="273" y="728" width="5" height="7"/><rect x="281" y="728" width="5" height="7"/><rect x="289" y="728" width="5" height="7"/><rect x="297" y="728" width="4" height="7"/></g>
<rect x="656" y="720" width="30" height="7" fill="#ff0000"/><rect x="687" y="720" width="29" height="7" fill="#00e040"/>
<g fill="#00e040"><rect x="656" y="728" width="5" height="7"/><rect x="664" y="728" width="5" height="7"/><rect x="672" y="728" width="5" height="7"/><rect x="680" y="728" width="5" height="7"/><rect x="688" y="728" width="5" height="7"/><rect x="696" y="728" width="5" height="7"/><rect x="704" y="728" width="5" height="7"/><rect x="712" y="728" width="4" height="7"/></g>
</g>
<path stroke="#0000b8" d="M840.500 716V738M862.500 716V738M884.500 716V738M950.500 716V738" shape-rendering="crispEdges"/>
<path d="M871 731V722M868 736L871 726 874 736Z" fill="#c0c0f0" stroke="#2020c0"/><path d="M867 720a5 5 0 0 0 0 7M875 720a5 5 0 0 1 0 7" fill="none" stroke="#e02020"/>
<text x="886" y="732" style="font-family:'Liberation Sans',sans-serif;font-size:12px;letter-spacing:0;fill:#00e040">USDCHF</text><use href="#d" x="936" y="722" stroke="#00e040"/>
<text x="952" y="732" style="font-family:'Liberation Sans',sans-serif;font-size:12px;letter-spacing:.3px;fill:#00e040">23:14:28</text>

<!-- taskbar -->
<rect y="738" width="1023" height="30" fill="url(#tk)"/>
<path d="M0 738H88Q97 745 97 753Q97 762 88 768H0Z" fill="url(#sb)"/>
<g shape-rendering="crispEdges"><path d="M11 746l8-2v7l-8 1z" fill="#e84020"/><path d="M20 744l8-1v7l-8 1z" fill="#60b030"/><path d="M11 753l8-1v7l-8 2z" fill="#3080e0"/><path d="M20 752l8-1v7l-8 1z" fill="#f0c020"/></g>
<text x="40" y="759" style="font-family:'WenQuanYi Zen Hei','Noto Sans CJK SC',sans-serif;font-size:17px;font-style:italic;letter-spacing:0;fill:#fff">开始</text>
<circle cx="116" cy="752" r="7" fill="#e0a020"/><circle cx="116" cy="752" r="5" fill="#f8f8f8"/><path d="M114 749l5 3-5 3z" fill="#104080"/>
<path d="M133 757L145 746 148 757Z" fill="#f0c020"/><path d="M133 757h15l-3 4h-9z" fill="#20a040"/><path d="M140 752l4-6 1 8z" fill="#e04010"/>
<circle cx="162" cy="753" r="6" fill="none" stroke="#30a0f0" stroke-width="2.500"/><path d="M157 752H167" stroke="#30a0f0" stroke-width="2"/><path d="M155 760Q162 748 170 745" stroke="#f0f0f0" fill="none"/>
<text x="183" y="751" style="font-family:'Liberation Sans',sans-serif;font-size:11px;font-weight:bold;letter-spacing:0;fill:#a0c0f0">»</text>
<g fill="#4a7ee4" stroke="#3868d4"><rect x="199" y="742" width="50" height="24" rx="2"/><rect x="251" y="742" width="50" height="24" rx="2"/><rect x="303" y="742" width="50" height="24" rx="2"/><rect x="355" y="742" width="50" height="24" rx="2"/><rect x="407" y="742" width="50" height="24" rx="2" fill="#5a8cec"/></g>
<rect x="209" y="746" width="10" height="11" fill="#c8d8f0" stroke="#203080"/><rect x="214" y="752" width="9" height="8" fill="#e0e0e0" stroke="#304080"/><path d="M215 757l2-2 2 2 2-2" fill="none" stroke="#2040c0"/>
<g fill="#d01010"><circle cx="263" cy="752" r="2.500"/><circle cx="268" cy="752" r="2.500"/><circle cx="273" cy="752" r="2.500"/><circle cx="265.500" cy="748" r="2.500"/><circle cx="270.500" cy="748" r="2.500"/><circle cx="265.500" cy="756" r="2.500"/><circle cx="270.500" cy="756" r="2.500"/></g>
<rect x="312" y="745" width="16" height="16" fill="#fff"/><path d="M314 759l6-11 5 7M317 760l5-9 4 8M313 755l5-8" stroke="#101030" fill="none"/>
<text x="364" y="757" style="font-family:'Liberation Sans',sans-serif;font-size:10px;font-weight:bold;letter-spacing:-.5px;fill:#101010">N</text><text x="373" y="757" style="font-family:'Liberation Sans',sans-serif;font-size:11px;font-weight:bold;letter-spacing:0;fill:#e01010">F</text>
<rect x="416" y="746" width="14" height="14" rx="2" fill="#e8e8f0"/><circle cx="421" cy="752" r="5" fill="none" stroke="#2080e0" stroke-width="2"/>
<g class="tb">
<text x="228" y="756">2.</text><text x="280" y="756">C.</text><text x="332" y="756">2.</text><text x="384" y="756">7.</text>
<text x="436" y="757" style="font-family:'WenQuanYi Zen Hei','Noto Sans CJK SC',sans-serif;letter-spacing:0;font-size:13px">外</text>
</g>
<rect x="497" y="739" width="15" height="14" rx="2" fill="#3a6fdc" stroke="#5a8cec"/><path d="M501 748l3.500-4 3.500 4" fill="none" stroke="#fff" stroke-width="2"/>
<rect x="497" y="754" width="15" height="13" rx="2" fill="#3a6fdc" stroke="#5a8cec"/><path d="M501 758l3.500 4 3.500-4" fill="none" stroke="#fff" stroke-width="2"/>
<rect x="522" y="750" width="13" height="9" rx="1" fill="#f0f0f0" stroke="#303030"/><path d="M524 752h9M524 754h9M524 756h9" stroke="#404040"/><path d="M528 750v-3h4" stroke="#404040" fill="none"/>
<text x="545" y="758" style="font-family:'WenQuanYi Zen Hei','Noto Sans CJK SC',sans-serif;font-size:12px;letter-spacing:0;fill:#a8c0f0">我的电脑</text>
<text x="601" y="751" style="font-family:'Liberation Sans',sans-serif;font-size:11px;font-weight:bold;letter-spacing:0;fill:#a0c0f0">»</text>
<rect x="624" y="738" width="399" height="30" fill="url(#try)"/>
<rect x="614.500" y="743.500" width="17" height="18" fill="none" stroke="#e08020" stroke-dasharray="1 1"/>
<circle cx="623" cy="753" r="8" fill="#2080d8" stroke="#80c0f0"/><path d="M621 749l4 4-4 4" fill="none" stroke="#fff" stroke-width="2"/>
<!-- tray icons -->
<path d="M636 752h12l-2-5-3 3-3-3-2 4ZM638 753h8l-2 5h-4Z" fill="#f0e020" stroke="#201000"/>
<path d="M654 760l4-8 6-4-4 8z" fill="#2080b0" stroke="#103060" stroke-width=".5"/>
<rect x="670" y="746" width="14" height="14" fill="#e01010" stroke="#400"/><path d="M673 749l4 3 4-3M673 753l4 3 4-3" fill="none" stroke="#fff" stroke-width="1.500"/>
<path d="M690 746V760M701 746L692 753 702 760" fill="none" stroke="#e01010" stroke-width="3"/><path d="M691 746V760" stroke="#10d040" stroke-width="1"/>
<circle cx="713" cy="748" r="3" fill="#c0c0c0" stroke="#303030"/><ellipse cx="713" cy="755" rx="5" ry="4" fill="#a0a0a0" stroke="#303030"/>
<rect x="725" y="746" width="8" height="8" fill="#c0d8f8" stroke="#3050a0"/><rect x="730" y="750" width="8" height="8" fill="#e0e8f8" stroke="#3050a0"/>
<circle cx="749" cy="753" r="7" fill="#1870c8"/><path d="M742 755h14" stroke="#e08020" stroke-width="2"/><path d="M745 759Q749 754 755 757" stroke="#30a040" fill="none"/>
<path d="M761 749h3l5-3v14l-5-3h-3z" fill="#e07030" stroke="#401000"/><path d="M771 748v10M774 746v14" stroke="#201010"/>
<rect x="778" y="746" width="16" height="16" fill="#1a90d8" stroke="#fff"/><path d="M780 760h7" stroke="#20e040" stroke-width="2"/><circle cx="790" cy="756" r="3" fill="#d0d0d0"/>
<rect x="798" y="746" width="8" height="8" fill="#c0d8f8" stroke="#3050a0"/><rect x="803" y="750" width="8" height="8" fill="#e0e8f8" stroke="#3050a0"/>
<path d="M814 746H830L822 760Z" fill="#102040"/><path d="M818 748h8l-4 5z" fill="#30a0e0"/>
<rect x="834" y="746" width="13" height="13" fill="#f8e840" stroke="#203060"/><path d="M834 748h13" stroke="#303030" stroke-dasharray="1 1"/>
<path d="M857 745L864 752H850ZM850 754H864L857 761Z" fill="#20a040"/>
<circle cx="873" cy="752" r="5" fill="#e0e0e0" stroke="#303030"/><rect x="870" y="755" width="14" height="7" fill="#2040a0"/><text x="875" y="761" style="font-size:8px;letter-spacing:0;fill:#fff">32</text>
<g><rect x="886" y="746" width="5" height="5" fill="#f0e020"/><rect x="892" y="746" width="5" height="5" fill="#e020a0"/><rect x="886" y="752" width="5" height="5" fill="#20d0c0"/><rect x="892" y="752" width="5" height="5" fill="#f0f0f0"/><rect x="898" y="750" width="4" height="5" fill="#a0e020"/><rect x="890" y="757" width="5" height="4" fill="#404040"/></g>
<rect x="904" y="745" width="16" height="16" fill="#fff"/><path d="M908 748v10" stroke="#e02020" stroke-width="2"/><path d="M913 748h4M913 752h4M913 756h4" stroke="#204090"/><path d="M906 758h6" stroke="#20a040" stroke-width="2"/>
<path d="M923 753Q930 745 938 752Q930 761 923 753Z" fill="#80c820" stroke="#304010"/>
<circle cx="946" cy="752" r="5" fill="#b0b0b0" stroke="#303030"/><path d="M950 757l4 3M952 753l3 2" stroke="#e0e0e0"/>
<path d="M961 745l5 4-2 4 7 3-5 4-6-5 2-3z" fill="#60a060" stroke="#203020"/>
<text x="980" y="757" style="font-family:'Liberation Sans',sans-serif;font-size:12px;letter-spacing:.5px;fill:#fff">23:14</text>
</svg>
</body></html>
